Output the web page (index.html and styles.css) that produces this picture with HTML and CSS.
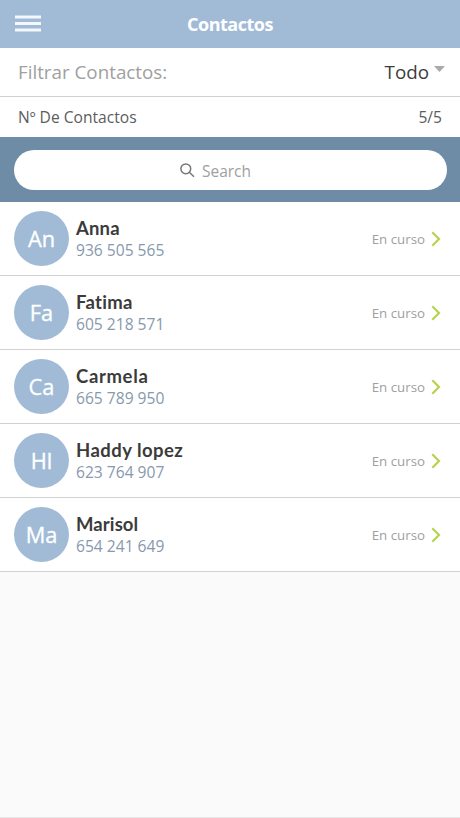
FILE: index.html
```html
<!DOCTYPE html>
<html lang="es">
<head>
<meta charset="utf-8">
<title>Contactos</title>
<link rel="stylesheet" href="styles.css">
</head>
<body>
<div class="app">
  <header class="topbar">
    <svg class="menu" width="26" height="18" viewBox="0 0 26 18"><path d="M0 2h26M0 8.5h26M0 15h26" stroke="#f4f8fc" stroke-width="2.8"/></svg>
    <h1 class="title">Contactos</h1>
  </header>
  <div class="filter">
    <span class="filter-label">Filtrar Contactos:</span>
    <span class="filter-value">Todo</span>
    <svg class="caret" width="11" height="6" viewBox="0 0 11 6"><path d="M0 0h11L5.5 6z" fill="#aaa"/></svg>
  </div>
  <div class="count"><span class="count-label">Nº De Contactos</span><span class="count-value">5/5</span></div>
  <div class="searchbar">
    <div class="search">
      <svg class="search-icon" width="15" height="15" viewBox="0 0 15 15" fill="none" stroke="#777" stroke-width="1.5"><circle cx="5.8" cy="5.8" r="4.9"/><path d="M9.3 9.3l4.7 4.5"/></svg>
      <span class="search-text">Search</span>
    </div>
  </div>
  <main class="list">
    <div class="row">
      <div class="avatar"><span>An</span></div>
      <div class="info"><div class="name anna">Anna</div><div class="phone">936 505 565</div></div>
      <span class="status">En curso</span>
      <svg class="chevron" width="10" height="16" viewBox="0 0 10 16"><path d="M1.3 1.3L8 8l-6.7 6.7" fill="none" stroke="#b7d24f" stroke-width="2.2"/></svg>
    </div>
    <div class="row">
      <div class="avatar"><span>Fa</span></div>
      <div class="info"><div class="name fatima">Fatima</div><div class="phone">605 218 571</div></div>
      <span class="status">En curso</span>
      <svg class="chevron" width="10" height="16" viewBox="0 0 10 16"><path d="M1.3 1.3L8 8l-6.7 6.7" fill="none" stroke="#b7d24f" stroke-width="2.2"/></svg>
    </div>
    <div class="row">
      <div class="avatar"><span>Ca</span></div>
      <div class="info"><div class="name carmela">Carmela</div><div class="phone">665 789 950</div></div>
      <span class="status">En curso</span>
      <svg class="chevron" width="10" height="16" viewBox="0 0 10 16"><path d="M1.3 1.3L8 8l-6.7 6.7" fill="none" stroke="#b7d24f" stroke-width="2.2"/></svg>
    </div>
    <div class="row">
      <div class="avatar"><span>Hl</span></div>
      <div class="info"><div class="name haddy">Haddy lopez</div><div class="phone">623 764 907</div></div>
      <span class="status">En curso</span>
      <svg class="chevron" width="10" height="16" viewBox="0 0 10 16"><path d="M1.3 1.3L8 8l-6.7 6.7" fill="none" stroke="#b7d24f" stroke-width="2.2"/></svg>
    </div>
    <div class="row">
      <div class="avatar"><span>Ma</span></div>
      <div class="info"><div class="name marisol">Marisol</div><div class="phone">654 241 649</div></div>
      <span class="status">En curso</span>
      <svg class="chevron" width="10" height="16" viewBox="0 0 10 16"><path d="M1.3 1.3L8 8l-6.7 6.7" fill="none" stroke="#b7d24f" stroke-width="2.2"/></svg>
    </div>
  </main>
</div>
</body>
</html>
```
FILE: styles.css
```css
* { box-sizing: border-box; }
body { margin: 0; font-family: "Open Sans", "Noto Sans", sans-serif; background: #fafafa; }
svg { display: block; flex: none; }
span { white-space: nowrap; }
.app { height: 818px; overflow: hidden; display: flex; flex-direction: column; border-bottom: 1px solid #e8e8e8; }
.topbar { height: 48px; flex: none; display: grid; grid-template-columns: 80px 1fr 80px; align-items: center; background: #a1bbd7; }
.menu { margin-left: 15px; }
.title { margin: 0; font-size: 18px; line-height: 24px; font-weight: 700; letter-spacing: -0.5px; text-align: center; color: #fff; }
.filter { height: 49px; flex: none; display: flex; align-items: center; padding: 0 15px 0 18px; background: #fff; border-bottom: 1px solid #d2d2d2; }
.filter-label { flex: 1; font-size: 18.8px; color: #a0a0a0; }
.filter-value { font-size: 18.8px; color: #3c3c3c; }
.caret { margin: -7px 0 0 5px; }
.count { height: 40px; flex: none; display: flex; align-items: center; justify-content: space-between; padding: 0 18px; background: #fff; font-size: 15.6px; color: #5c5c5c; }
.searchbar { height: 65px; flex: none; padding: 13px 13px 12px 14px; background: #6e8ca6; }
.search { height: 40px; border-radius: 20px; background: #fff; display: flex; align-items: center; justify-content: center; gap: 7px; padding-right: 30px; }
.search-text { font-size: 15.5px; padding-top: 2px; color: #a0a0a0; }
.row { height: 74px; display: flex; align-items: center; padding: 0 19px 0 14px; background: #fff; border-bottom: 1px solid #d2d2d2; }
.avatar { width: 55px; height: 55px; flex: none; border-radius: 50%; background: #a1bbd7; display: flex; align-items: center; justify-content: center; font-size: 21.8px; font-weight: 500; color: #fff; -webkit-text-stroke: 0.3px #fff; }
.info { flex: 1; margin-left: 7px; }
.name { font-family: Lato, sans-serif; font-size: 18.5px; line-height: 22px; font-weight: 700; font-variant-ligatures: none; letter-spacing: 0.45px; color: #3b3b3b; }
.anna { letter-spacing: 0.15px; }
.fatima { letter-spacing: 0.3px; }
.marisol { letter-spacing: 0.1px; }
.carmela { letter-spacing: 0.65px; }
.phone { font-size: 15.6px; line-height: 22px; color: #8799ae; }
.status { font-size: 13.3px; color: #a0a0a0; }
.chevron { margin-left: 6px; }
```
